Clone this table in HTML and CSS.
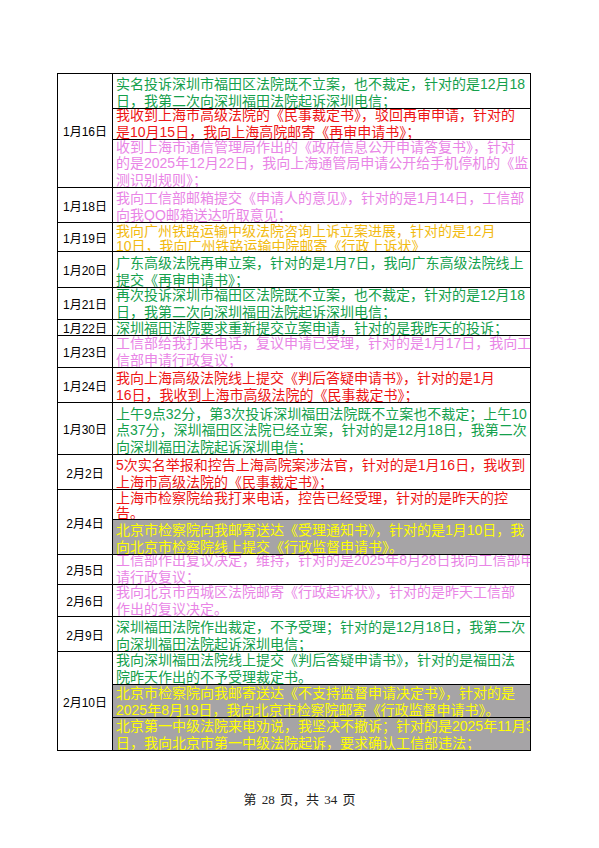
FILE: index.html
```html
<!DOCTYPE html>
<html lang="zh-CN">
<head>
  <meta charset="UTF-8">
  <title>第 28 页</title>
  <link rel="stylesheet" href="styles.css">
</head>
<body>
  <div class="sheet">
    <div class="date span3">1月16日</div>
    <div class="entry green"><p>实名投诉深圳市福田区法院既不立案，也不裁定，针对的是12月18<br>日，我第二次向深圳福田法院起诉深圳电信；</p></div>
    <div class="entry red"><p>我收到上海市高级法院的《民事裁定书》，驳回再审申请，针对的<br>是10月15日，我向上海高院邮寄《再审申请书》；</p></div>
    <div class="entry pink"><p>收到上海市通信管理局作出的《政府信息公开申请答复书》，针对<br>的是2025年12月22日，我向上海通管局申请公开给手机停机的《监<br>测识别规则》；</p></div>

    <div class="date">1月18日</div>
    <div class="entry pink"><p>我向工信部邮箱提交《申请人的意见》，针对的是1月14日，工信部<br>向我QQ邮箱送达听取意见；</p></div>

    <div class="date">1月19日</div>
    <div class="entry gold top tight"><p>我向广州铁路运输中级法院咨询上诉立案进展，针对的是12月<br>10日，我向广州铁路运输中院邮寄《行政上诉状》</p></div>

    <div class="date">1月20日</div>
    <div class="entry green"><p>广东高级法院再审立案，针对的是1月7日，我向广东高级法院线上<br>提交《再审申请书》；</p></div>

    <div class="date">1月21日</div>
    <div class="entry green"><p>再次投诉深圳市福田区法院既不立案，也不裁定，针对的是12月18<br>日，我第二次向深圳福田法院起诉深圳电信；</p></div>

    <div class="date">1月22日</div>
    <div class="entry green"><p>深圳福田法院要求重新提交立案申请，针对的是我昨天的投诉；</p></div>

    <div class="date">1月23日</div>
    <div class="entry pink"><p>工信部给我打来电话，复议申请已受理，针对的是1月17日，我向工<br>信部申请行政复议；</p></div>

    <div class="date">1月24日</div>
    <div class="entry red"><p>我向上海高级法院线上提交《判后答疑申请书》，针对的是1月<br>16日，我收到上海市高级法院的《民事裁定书》；</p></div>

    <div class="date">1月30日</div>
    <div class="entry green"><p>上午9点32分，第3次投诉深圳福田法院既不立案也不裁定；上午10<br>点37分，深圳福田区法院已经立案，针对的是12月18日，我第二次<br>向深圳福田法院起诉深圳电信；</p></div>

    <div class="date">2月2日</div>
    <div class="entry red"><p>5次实名举报和控告上海高院案涉法官，针对的是1月16日，我收到<br>上海市高级法院的《民事裁定书》；</p></div>

    <div class="date span2">2月4日</div>
    <div class="entry red tight"><p>上海市检察院给我打来电话，控告已经受理，针对的是昨天的控<br>告。</p></div>
    <div class="entry flag"><p>北京市检察院向我邮寄送达《受理通知书》，针对的是1月10日，我<br>向北京市检察院线上提交《行政监督申请书》。</p></div>

    <div class="date">2月5日</div>
    <div class="entry pink"><p>工信部作出复议决定，维持，针对的是2025年8月28日我向工信部申<br>请行政复议；</p></div>

    <div class="date">2月6日</div>
    <div class="entry pink"><p>我向北京市西城区法院邮寄《行政起诉状》，针对的是昨天工信部<br>作出的复议决定。</p></div>

    <div class="date">2月9日</div>
    <div class="entry green"><p>深圳福田法院作出裁定，不予受理；针对的是12月18日，我第二次<br>向深圳福田法院起诉深圳电信；</p></div>

    <div class="date span3">2月10日</div>
    <div class="entry green"><p>我向深圳福田法院线上提交《判后答疑申请书》，针对的是福田法<br>院昨天作出的不予受理裁定书。</p></div>
    <div class="entry flag"><p>北京市检察院向我邮寄送达《不支持监督申请决定书》，针对的是<br>2025年8月19日，我向北京市检察院邮寄《行政监督申请书》。</p></div>
    <div class="entry flag"><p>北京第一中级法院来电劝说，我坚决不撤诉；针对的是2025年11月3<br>日，我向北京市第一中级法院起诉，要求确认工信部违法；</p></div>
  </div>

  <p class="page-no">第 28 页，共 34 页</p>
</body>
</html>
```

FILE: styles.css
```css
body {
  margin: 0;
  background: #fff;
  font-family: 'Liberation Sans', 'Noto Sans CJK SC', sans-serif;
}

.sheet {
  width: 474px;
  margin: 73px 0 0 57px;
  box-sizing: border-box;
  display: grid;
  grid-template-columns: 55px 1fr;
  /* row heights measured border to border */
  grid-template-rows: 35px 31px 48px 35px 29px 36px 32px 16px 32px 35px 52px 35px 30px 35px 30px 32px 35px 33px 33px 33px;
  border-top: 1px solid #000;
  border-left: 1px solid #000;
}

.date {
  grid-column: 1;
  display: flex;
  align-items: center;
  justify-content: center;
  font-size: 12px;
  color: #000;
  border-right: 1px solid #000;
  border-bottom: 1px solid #000;
}

.date.span2 {
  grid-row: span 2;
}

.date.span3 {
  grid-row: span 3;
}

.entry {
  grid-column: 2;
  display: flex;
  flex-direction: column;
  justify-content: flex-end;
  overflow: hidden;
  padding: 0 1px 0 3px;
  border-right: 1px solid #000;
  border-bottom: 1px solid #000;
  font-size: 14px;
  white-space: nowrap;
}

.entry p {
  margin: 0 0 -1px 0;
  line-height: 16.5px;
}

/* rows too short for two lines */
.entry.top {
  justify-content: flex-start;
  padding-top: 1px;
}

.entry.tight p {
  line-height: 14.5px;
}

.green {
  color: #14a04c;
}

.red {
  color: #ee1515;
}

.pink {
  color: #e985e6;
}

.gold {
  color: #f2ba10;
}

.flag {
  background: #a6a4a6;
  color: #ffff00;
}

.page-no {
  margin: 41px 0 0 0;
  text-align: center;
  font-family: 'Liberation Serif', 'Noto Sans CJK SC', serif;
  font-size: 13px;
  line-height: 16px;
  word-spacing: 2px;
  color: #222;
}
```
